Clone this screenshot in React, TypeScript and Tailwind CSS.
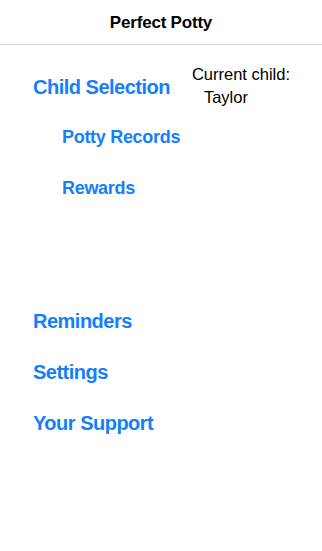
import React from 'react';

const blue = 'text-[#147EFB]';

function MenuLink({ label, indent }: { label: string; indent?: boolean }) {
    return (
        <div className={`h-[51px] flex items-center ${indent ? 'pl-[62px]' : 'pl-[33px]'}`}>
            <span
                className={`${blue} font-bold ${indent ? 'text-[18px] tracking-[-0.3px]' : 'text-[20px] tracking-[-0.5px]'}`}
            >
                {label}
            </span>
        </div>
    );
}

export default function App() {
    return (
        <div className="w-[322px] h-[551px] bg-white font-['Liberation_Sans',Arial,sans-serif]">
            <div className="h-[45px] flex items-center justify-center border-b border-[#d4d4d4]">
                <span className="text-[17px] font-bold text-black tracking-[-0.2px] mt-[1px]">Perfect Potty</span>
            </div>

            <div className="pt-[16px]">
                {/* first row with current child info */}
                <div className="h-[51px] flex items-center justify-between pl-[33px] pr-[32px]">
                    <span className={`${blue} font-bold text-[20px] tracking-[-0.5px]`}>Child Selection</span>
                    <div className="text-[16.5px] text-black leading-[23px] -mt-[2px]">
                        <div>Current child:</div>
                        <div className="pl-[12px]">Taylor</div>
                    </div>
                </div>
                <MenuLink label="Potty Records" indent />
                <MenuLink label="Rewards" indent />

                <div className="h-[81px]" />

                <MenuLink label="Reminders" />
                <MenuLink label="Settings" />
                <MenuLink label="Your Support" />
            </div>
        </div>
    );
}
